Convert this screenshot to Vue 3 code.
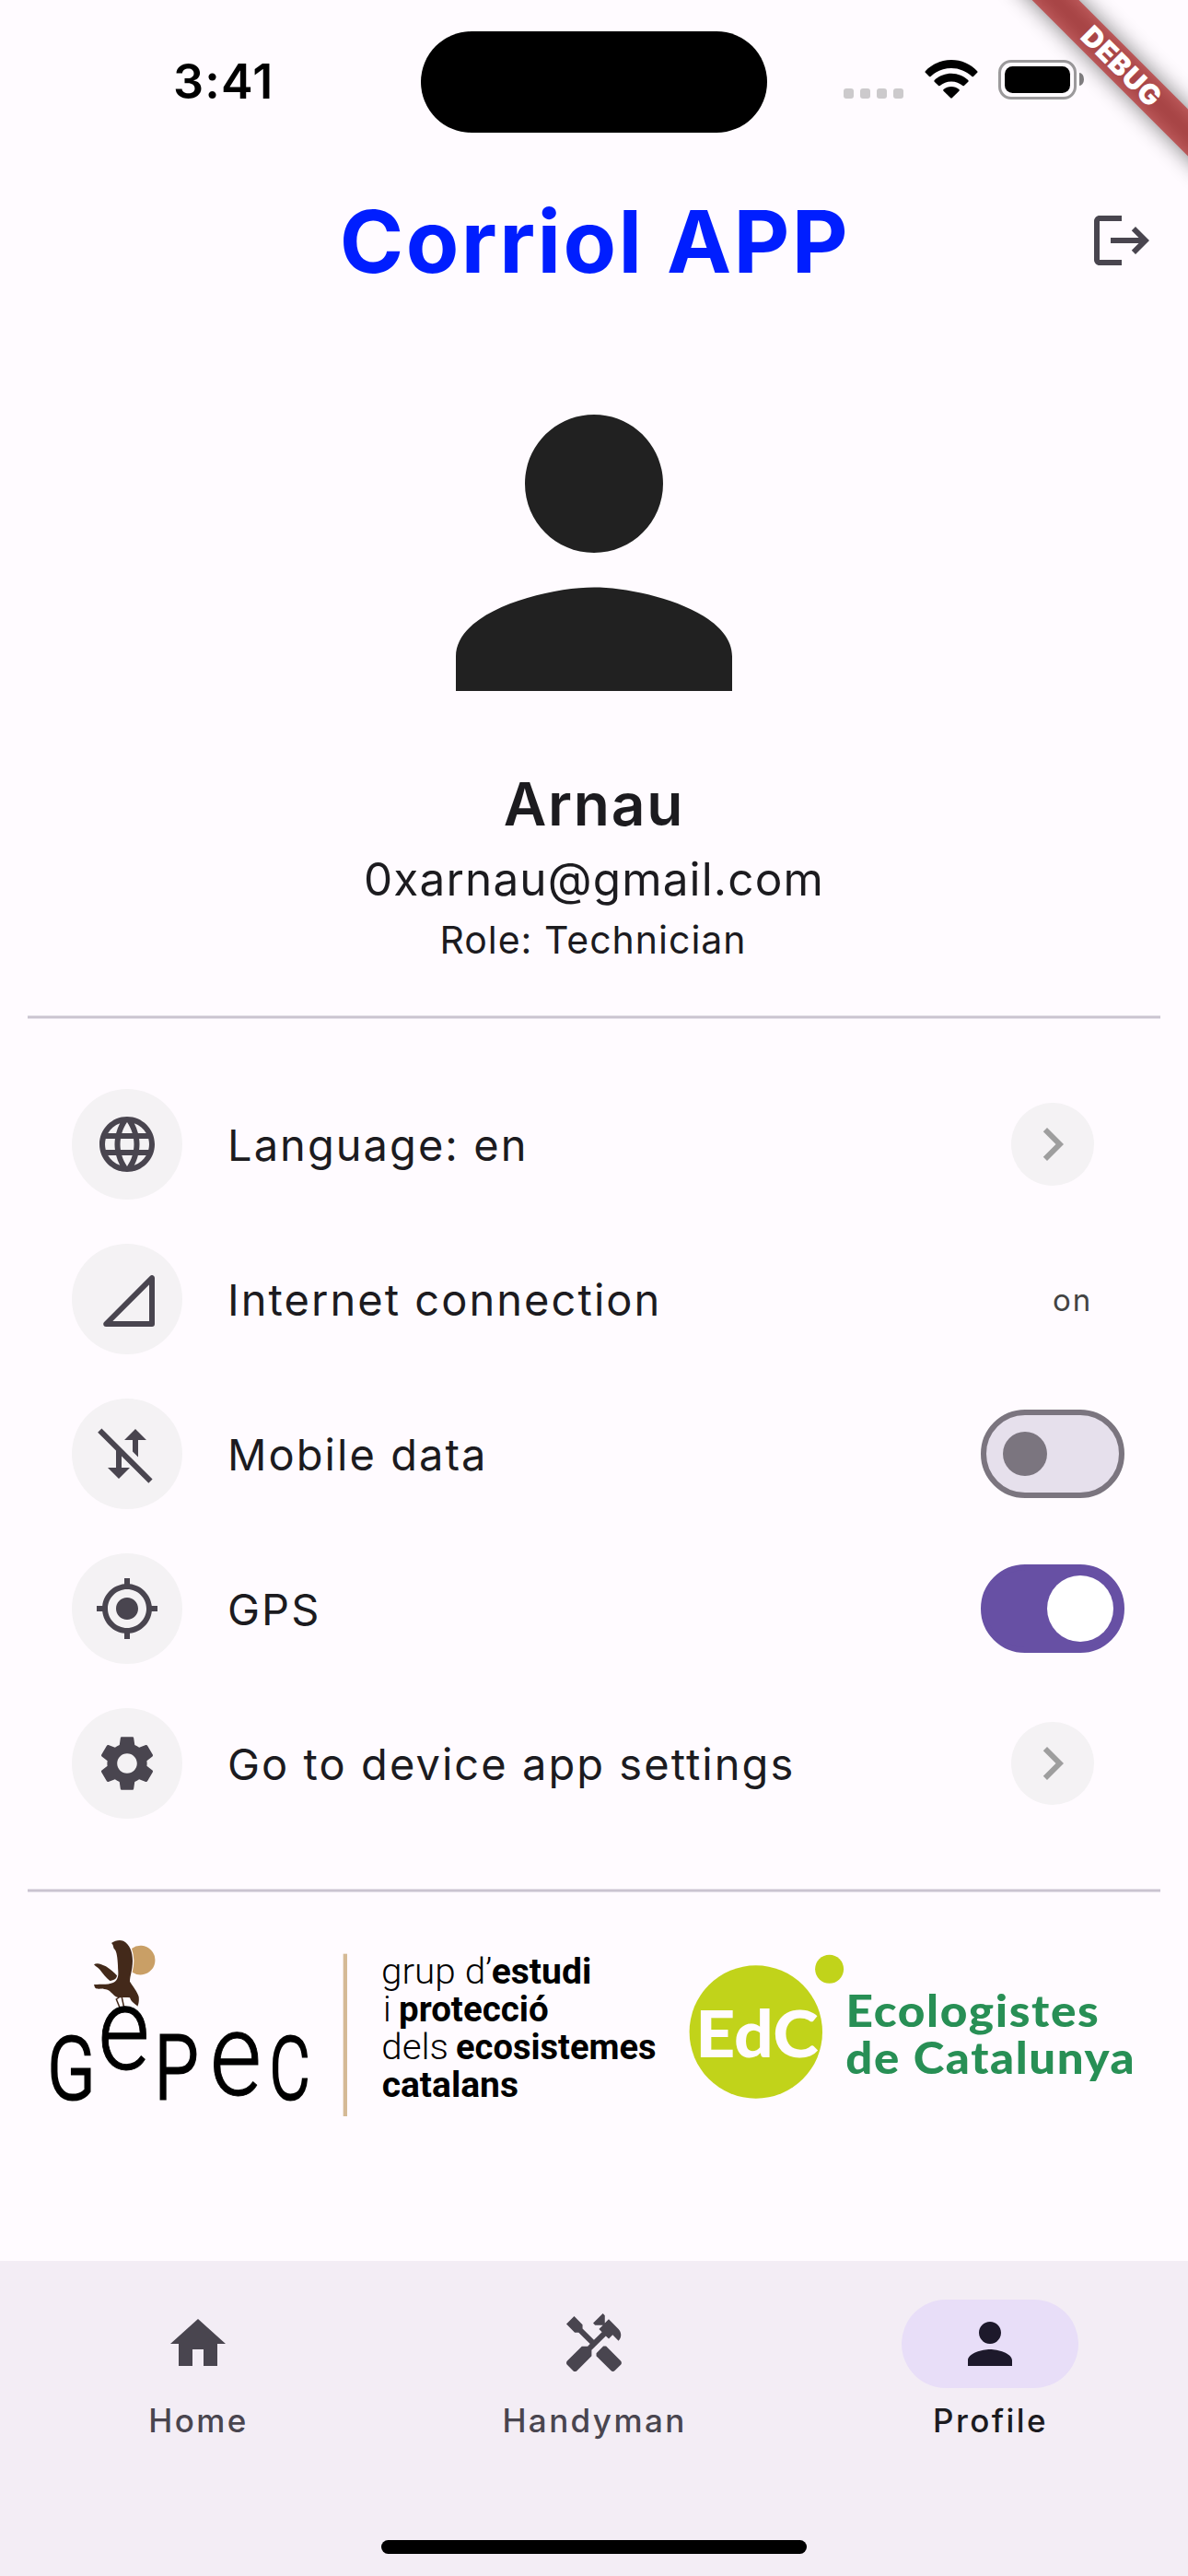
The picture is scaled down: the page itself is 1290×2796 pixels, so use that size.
<script setup>
import { ref } from 'vue'

const globe = 'M11.99 2C6.47 2 2 6.48 2 12s4.47 10 9.99 10C17.52 22 22 17.52 22 12S17.52 2 11.99 2zm6.93 6h-2.95c-.32-1.25-.78-2.45-1.38-3.56 1.84.63 3.37 1.91 4.33 3.56zM12 4.04c.83 1.2 1.48 2.53 1.91 3.96h-3.82c.43-1.43 1.08-2.76 1.91-3.96zM4.26 14C4.1 13.36 4 12.69 4 12s.1-1.36.26-2h3.38c-.08.66-.14 1.32-.14 2s.06 1.34.14 2H4.26zm.82 2h2.95c.32 1.25.78 2.45 1.38 3.56-1.84-.63-3.37-1.9-4.33-3.56zm2.95-8H5.08c.96-1.66 2.49-2.93 4.33-3.56C8.81 5.55 8.35 6.75 8.03 8zM12 19.96c-.83-1.2-1.48-2.53-1.91-3.96h3.82c-.43 1.43-1.08 2.76-1.91 3.96zM14.34 14H9.66c-.09-.66-.16-1.32-.16-2s.07-1.35.16-2h4.68c.09.65.16 1.32.16 2s-.07 1.34-.16 2zm.25 5.56c.6-1.11 1.06-2.31 1.38-3.56h2.95c-.96 1.65-2.49 2.93-4.33 3.56zM16.36 14c.08-.66.14-1.32.14-2s-.06-1.34-.14-2h3.38c.16.64.26 1.31.26 2s-.1 1.36-.26 2h-3.38z'
const mobileOff = 'M15 3l-4 4h3v4.17l2 2V7h3l-4-4zM2.81 2.81L1.39 4.22 8 10.83V17H5l4 4 4-4h-3v-4.17l9.78 9.78 1.41-1.42L2.81 2.81z'
const locate = 'M12 8c-2.21 0-4 1.79-4 4s1.79 4 4 4 4-1.79 4-4-1.79-4-4-4zm8.94 3c-.46-4.17-3.77-7.48-7.94-7.94V1h-2v2.06C6.83 3.52 3.52 6.83 3.06 11H1v2h2.06c.46 4.17 3.77 7.48 7.94 7.94V23h2v-2.06c4.17-.46 7.48-3.77 7.94-7.94H23v-2h-2.06zM12 19c-3.87 0-7-3.13-7-7s3.13-7 7-7 7 3.13 7 7-3.13 7-7 7z'
const gear = 'M19.14 12.94c.04-.3.06-.61.06-.94 0-.32-.02-.64-.07-.94l2.03-1.58c.18-.14.23-.41.12-.61l-1.92-3.32c-.12-.22-.37-.29-.59-.22l-2.39.96c-.5-.38-1.03-.7-1.62-.94l-.36-2.54c-.04-.24-.24-.41-.48-.41h-3.84c-.24 0-.43.17-.47.41l-.36 2.54c-.59.24-1.13.57-1.62.94l-2.39-.96c-.22-.08-.47 0-.59.22L2.74 8.87c-.12.21-.08.47.12.61l2.03 1.58c-.05.3-.09.63-.09.94s.02.64.07.94l-2.03 1.58c-.18.14-.23.41-.12.61l1.92 3.32c.12.22.37.29.59.22l2.39-.96c.5.38 1.03.7 1.62.94l.36 2.54c.05.24.24.41.48.41h3.84c.24 0 .44-.17.47-.41l.36-2.54c.59-.24 1.13-.56 1.62-.94l2.39.96c.22.08.47 0 .59-.22l1.92-3.32c.12-.22.07-.47-.12-.61l-2.01-1.58zM12 15.6c-1.98 0-3.6-1.62-3.6-3.6s1.62-3.6 3.6-3.6 3.6 1.62 3.6 3.6-1.62 3.6-3.6 3.6z'
const person = 'M12 12c2.21 0 4-1.79 4-4s-1.79-4-4-4-4 1.79-4 4 1.79 4 4 4zm0 2c-2.67 0-8 1.34-8 4v2h16v-2c0-2.66-5.33-4-8-4z'
const home = 'M10 20v-6h4v6h5v-8h3L12 3 2 12h3v8z'
const handyman = 'M21.67 18.17l-5.3-5.3h-.99l-2.54 2.54v.99l5.3 5.3c.39.39 1.02.39 1.41 0l2.12-2.12c.39-.38.39-1.02 0-1.41zM17.34 10.19l1.41-1.41 2.12 2.12c1.17-1.17 1.17-3.07 0-4.24l-3.54-3.54-1.41 1.41V1.71L15.22 1l-3.54 3.54.71.71h2.83l-1.41 1.41 1.06 1.06-2.89 2.89-4.13-4.13V5.06L4.83 2.04 2 4.87 5.03 7.9h1.41l4.13 4.13-.85.85H7.6l-5.3 5.3c-.39.39-.39 1.02 0 1.41l2.12 2.12c.39.39 1.02.39 1.41 0l5.3-5.3v-2.12l5.15-5.15 1.06 1.05z'

const rows = ref([
  { id: 'language', label: 'Language: en', icon: globe, kind: 'link' },
  { id: 'internet', label: 'Internet connection', kind: 'value', value: 'on' },
  { id: 'mobile', label: 'Mobile data', icon: mobileOff, kind: 'switch', on: false },
  { id: 'gps', label: 'GPS', icon: locate, kind: 'switch', on: true },
  { id: 'settings', label: 'Go to device app settings', icon: gear, kind: 'link' }
])

const tabs = [
  { label: 'Home', icon: home },
  { label: 'Handyman', icon: handyman },
  { label: 'Profile', icon: person }
]
const activeTab = ref('Profile')
</script>

<template>
  <div class="screen">
    <header class="status">
      <div class="time">3:41</div>
      <div class="island"></div>
      <div class="indicators">
        <div class="cell"><i v-for="n in 4" :key="n"></i></div>
        <svg class="wifi" viewBox="0 0 58 42" width="58" height="42">
          <path d="M29 0C40 0 50 4.600 57.200 12.200Q57.900 13 57.200 13.800L53 18Q52.200 18.700 51.400 18C45.500 12.300 37.600 8.900 29 8.900S12.500 12.300 6.600 18Q5.800 18.700 5 18L.8 13.800Q.1 13 .8 12.200C8 4.600 18 0 29 0z" />
          <path d="M29 14.700C36.200 14.700 42.600 17.500 47.300 22.100Q48 22.900 47.300 23.700L42.900 28Q42.200 28.700 41.400 28C38.100 25.200 33.800 23.400 29 23.400S19.900 25.200 16.600 28Q15.800 28.700 15.100 28L10.700 23.700Q10 22.900 10.700 22.100C15.400 17.500 21.800 14.700 29 14.700z" />
          <path d="M29 29C32.100 29 35.100 30.200 37.400 32.100Q38.300 32.900 37.500 33.700L29.800 41.300Q29 42 28.200 41.300L20.500 33.700Q19.700 32.900 20.600 32.100C22.900 30.200 25.900 29 29 29z" />
        </svg>
        <div class="battery"><div class="charge"></div></div>
        <div class="nub"></div>
      </div>
    </header>

    <div class="appbar">
      <h1>Corriol APP</h1>
      <svg class="icon logout" viewBox="0 0 24 24">
        <path d="M17 7l-1.410 1.410L18.170 11H8v2h10.170l-2.580 2.580L17 17l5-5zM4 5h8V3H4c-1.100 0-2 .9-2 2v14c0 1.100.9 2 2 2h8v-2H4V5z" />
      </svg>
    </div>

    <section class="profile">
      <svg class="avatar" viewBox="0 0 24 24"><path :d="person" /></svg>
      <div class="name">Arnau</div>
      <div class="email">0xarnau@gmail.com</div>
      <div class="role">Role: Technician</div>
    </section>

    <div class="divider"></div>

    <section class="rows">
      <div v-for="row in rows" :key="row.id" class="row">
        <div class="badge">
          <svg class="icon" viewBox="0 0 24 24">
            <path v-if="row.icon" :d="row.icon" />
            <path v-else class="outline" d="M21 4.400V21H4.400z" />
          </svg>
        </div>
        <div class="label">{{ row.label }}</div>
        <div v-if="row.kind === 'link'" class="go">
          <svg class="icon" viewBox="0 0 24 24"><path d="M10 6L8.590 7.410 13.170 12l-4.580 4.590L10 18l6-6z" /></svg>
        </div>
        <div v-else-if="row.kind === 'value'" class="value">{{ row.value }}</div>
        <div v-else class="switch" :class="{ on: row.on }" @click="row.on = !row.on"><div class="thumb"></div></div>
      </div>
    </section>

    <div class="divider"></div>

    <section class="logos">
      <svg viewBox="0 -78 2100 900" width="700" height="300">
        <path class="sun" d="M339 105A47.500 47.500 0 1 1 341 182Q352 142 339 105z" />
        <g class="bird">
          <path d="M273 87C285 78 300 76 312 80C332 90 342 115 342 145C342 175 333 195 333 212C342 228 358 245 362 262C364 278 360 290 358 293C350 285 338 280 333 265C315 262 300 268 288 262C275 255 270 240 255 238C240 236 225 240 219 232L216 222C240 220 270 224 285 212C300 200 294 180 294 160C293 135 290 115 284 108C277 103 282 95 273 87z" />
          <path d="M216 157C225 150 240 155 255 163C270 172 282 184 291 193C290 203 282 209 268 210C255 200 245 185 235 173C228 165 220 163 216 157z" />
          <path class="legs" d="M298 264l-9 6 11 27M307 264l7 33" />
        </g>
        <g class="letters">
          <text transform="translate(63.500 594) scale(.8 1)" font-size="286" stroke-width="9">G</text>
          <text transform="translate(229 498.500) scale(.865 1)" font-size="378" stroke-width="3">e</text>
          <text transform="translate(413 593) scale(.81 1)" font-size="288" stroke-width="9">P</text>
          <text transform="translate(593.500 582.500) scale(.865 1)" font-size="378" stroke-width="3">e</text>
          <text transform="translate(788 594) scale(.71 1)" font-size="286" stroke-width="9">C</text>
        </g>
        <rect class="bar" x="1028" y="122" width="13" height="529" />
        <g class="motto">
          <text x="1152" y="219" textLength="361" lengthAdjust="spacingAndGlyphs">grup d’</text>
          <text class="strong" x="1511" y="219" textLength="326" lengthAdjust="spacingAndGlyphs">estudi</text>
          <text x="1158" y="342">i</text>
          <text class="strong" x="1209" y="342" textLength="488" lengthAdjust="spacingAndGlyphs">protecció</text>
          <text x="1153" y="465" textLength="218" lengthAdjust="spacingAndGlyphs">dels</text>
          <text class="strong" x="1395" y="465" textLength="653" lengthAdjust="spacingAndGlyphs">ecosistemes</text>
          <text class="strong" x="1154" y="588" textLength="445" lengthAdjust="spacingAndGlyphs">catalans</text>
        </g>
      </svg>
      <svg viewBox="0 -26 530 300" width="530" height="300">
        <circle class="lime" cx="90.800" cy="125.500" r="72.200" />
        <circle class="lime" cx="170.600" cy="57.300" r="15.500" />
        <text class="edc" x="25.200" y="153.300" textLength="133.500" lengthAdjust="spacingAndGlyphs">EdC</text>
        <g class="eco">
          <text x="188.500" y="119.500" textLength="276" lengthAdjust="spacingAndGlyphs">Ecologistes</text>
          <text x="188.300" y="170.500" textLength="315" lengthAdjust="spacingAndGlyphs">de Catalunya</text>
        </g>
      </svg>
    </section>

    <nav class="tabs">
      <div v-for="tab in tabs" :key="tab.label" class="tab" :class="{ active: tab.label === activeTab }" @click="activeTab = tab.label">
        <div class="pill"><svg class="icon" viewBox="0 0 24 24"><path :d="tab.icon" /></svg></div>
        <div class="caption">{{ tab.label }}</div>
      </div>
      <div class="home-indicator"></div>
    </nav>

    <div class="debug">
      <div class="ribbon shadow"></div>
      <div class="ribbon band">DEBUG</div>
    </div>
  </div>
</template>

<style>
body { margin: 0; background: #fffbff; }
</style>

<style scoped>
.screen {
  position: relative;
  box-sizing: border-box;
  width: 1290px;
  height: 2796px;
  overflow: hidden;
  display: flex;
  flex-direction: column;
  background: #fffbff;
  color: #1c1b1f;
  font-family: Inter, "Liberation Sans", sans-serif;
}
.icon { display: block; width: 72px; height: 72px; fill: currentColor; }

.status { display: flex; height: 177px; flex: none; }
.time {
  width: 269px;
  margin-left: 188px;
  padding-top: 59px;
  line-height: 60px;
  font-size: 52px;
  font-weight: 600;
  letter-spacing: 1.200px;
  color: #000;
  box-sizing: border-box;
}
.island { width: 376px; height: 110px; margin-top: 34px; border-radius: 55px; background: #000; }
.indicators { display: flex; align-items: flex-start; padding: 65px 0 0 83px; }
.cell { display: flex; gap: 7px; margin-top: 31px; }
.cell i { width: 11px; height: 11px; border-radius: 3px; background: #cccacc; }
.wifi { margin-left: 22.500px; }
.battery {
  box-sizing: border-box;
  width: 85px;
  height: 43px;
  margin-left: 22.500px;
  padding: 3.500px;
  border: 3px solid #9b999b;
  border-radius: 14px;
}
.charge { width: 71px; height: 29px; border-radius: 8.500px; background: #000; margin: 0.500px; }
.nub { width: 5px; height: 14px; margin: 14px 0 0 3px; border-radius: 0 5px 5px 0 / 0 7px 7px 0; background: #7f7d7f; }

.appbar { display: flex; align-items: center; height: 168px; flex: none; padding: 0 36px 0 108px; }
h1 {
  flex: 1;
  margin: 0;
  padding: 2px 0 0 2px;
  text-align: center;
  font-size: 94px;
  line-height: 112px;
  font-weight: 700;
  letter-spacing: 2.400px;
  color: #001eff;
}
.logout { color: #49454f; }

.profile { display: flex; flex-direction: column; align-items: center; padding-top: 30px; }
.avatar { width: 450px; height: 450px; fill: #212121; }
.name { margin-top: 8px; line-height: 80px; font-size: 64px; font-weight: 600; letter-spacing: 1.800px; }
.email { margin-top: 11px; line-height: 60px; font-size: 49.500px; letter-spacing: 1.140px; }
.role { margin-top: 11px; margin-right: 2px; line-height: 50px; font-size: 41px; letter-spacing: 1px; }

.divider {
  box-sizing: border-box;
  flex: none;
  height: 4px;
  margin: 0 30px;
  border-top: 1px solid #e4dfe8;
  border-bottom: 1px solid #e4dfe8;
  background: #cac4d0;
}
.profile + .divider { margin-top: 57px; }

.rows { padding: 52px 69px 52px 78px; }
.row { display: flex; align-items: center; height: 168px; }
.badge, .go { display: flex; align-items: center; justify-content: center; border-radius: 50%; background: #f4f2f4; }
.badge { width: 120px; height: 120px; color: #49454f; }
.outline { fill: none; stroke: currentColor; stroke-width: 2; stroke-linejoin: round; }
.label { flex: 1; margin-left: 49px; padding-top: 2px; line-height: 60px; font-size: 47px; letter-spacing: 2.050px; }
.go { width: 90px; height: 90px; margin-right: 33px; color: #9e9e9e; }
.value { margin-right: 35px; padding-top: 1px; font-size: 33px; line-height: 48px; letter-spacing: 1.800px; color: #434343; }
.switch {
  box-sizing: border-box;
  display: flex;
  align-items: center;
  width: 156px;
  height: 96px;
  padding: 0 18px;
  border: 6px solid #7b757f;
  border-radius: 48px;
  background: #e6e0ec;
}
.thumb { width: 48px; height: 48px; border-radius: 50%; background: #7b757f; }
.switch.on { justify-content: flex-end; padding: 0 6px; border-color: #6750a4; background: #6750a4; }
.switch.on .thumb { width: 72px; height: 72px; background: #fff; }

.logos { display: flex; padding-left: 30px; height: 400px; flex: none; }
.sun { fill: #c99f66; }
.bird { fill: #43291a; }
.bird .legs { fill: none; stroke: #43291a; stroke-width: 4.500; }
.letters { font-family: Roboto, sans-serif; font-weight: 300; fill: #000; stroke: #000; }
.bar { fill: #d5ba96; }
.motto { font-family: Roboto, sans-serif; font-size: 116px; font-weight: 300; fill: #000; }
.motto .strong { font-weight: 700; }
.lime { fill: #c1d31a; }
.edc { font-family: Lato, sans-serif; font-size: 70px; font-weight: 900; fill: #fffbff; }
.eco { font-family: Lato, sans-serif; font-size: 47px; font-weight: 900; letter-spacing: 1.500px; fill: #288f55; }

.tabs {
  position: relative;
  display: flex;
  flex: 1;
  padding-top: 42px;
  background: #f3edf5;
  color: #49454f;
}
.tab { flex: 1; width: 430px; display: flex; flex-direction: column; align-items: center; }
.pill { display: flex; align-items: center; justify-content: center; width: 192px; height: 96px; border-radius: 48px; }
.caption { margin-top: 11px; padding-left: 1px; line-height: 48px; font-size: 35px; font-weight: 450; letter-spacing: 2.400px; }
.active .pill { background: #e8def8; color: #1d192b; }
.active .caption { color: #1c1b1f; }
.home-indicator {
  position: absolute;
  left: 414px;
  bottom: 24px;
  width: 462px;
  height: 15px;
  border-radius: 8px;
  background: #000;
}

.debug { position: absolute; top: 0; right: 0; width: 260px; height: 260px; overflow: hidden; }
.ribbon {
  position: absolute;
  left: 37.900px;
  top: 54.100px;
  width: 300px;
  height: 36px;
  transform: rotate(45deg);
}
.shadow { background: rgba(0, 0, 0, 0.5); filter: blur(11.900px); }
.band {
  background: rgba(183, 28, 28, 0.63);
  color: #fff;
  text-align: center;
  font-size: 30.600px;
  line-height: 36px;
  font-weight: 900;
  letter-spacing: .5px;
}
</style>
